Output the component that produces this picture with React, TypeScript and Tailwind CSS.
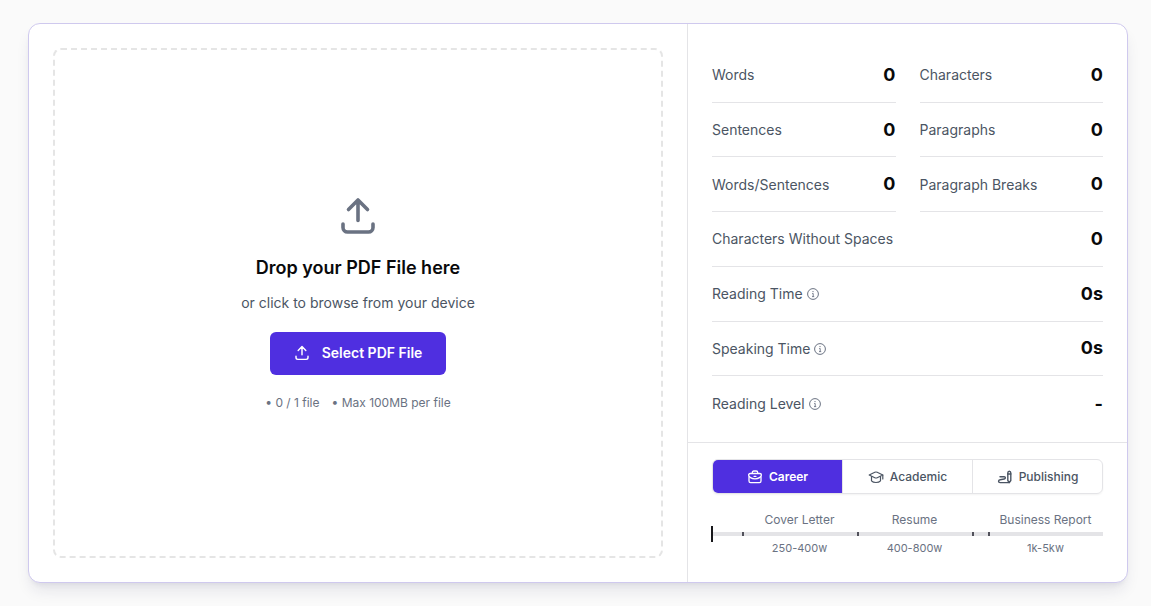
import React, { FC, ReactNode } from 'react';

interface StatRowProps {
  label: string;
  value: string;
  wide?: boolean;
  info?: boolean;
  last?: boolean;
}

interface GoalRange {
  name: string;
  words: string;
}

const stats: StatRowProps[] = [
  { label: 'Words', value: '0' },
  { label: 'Characters', value: '0' },
  { label: 'Sentences', value: '0' },
  { label: 'Paragraphs', value: '0' },
  { label: 'Words/Sentences', value: '0' },
  { label: 'Paragraph Breaks', value: '0' },
  { label: 'Characters Without Spaces', value: '0', wide: true },
  { label: 'Reading Time', value: '0s', wide: true, info: true },
  { label: 'Speaking Time', value: '0s', wide: true, info: true },
  { label: 'Reading Level', value: '-', wide: true, info: true, last: true },
];

// null is a gap between two ranges
const ranges: (GoalRange | null)[] = [
  null,
  { name: 'Cover Letter', words: '250-400w' },
  { name: 'Resume', words: '400-800w' },
  null,
  { name: 'Business Report', words: '1k-5kw' },
];

const UploadIcon: FC<{ className?: string }> = ({ className }) => (
  <svg
    className={className}
    viewBox="0 0 40 40"
    fill="none"
    stroke="currentColor"
    strokeWidth="3.6"
    strokeLinecap="round"
    strokeLinejoin="round"
    aria-hidden="true"
  >
    <path d="M20 24.5V4.5M10.5 13.5 20 4l9.5 9.5" />
    <path d="M5 28v3.5a4.5 4.5 0 0 0 4.5 4.5h21a4.5 4.5 0 0 0 4.5-4.5V28" />
  </svg>
);

const InfoIcon = () => (
  <svg className="size-3" viewBox="0 0 12 12" fill="none" stroke="currentColor" aria-hidden="true">
    <circle cx="6" cy="6" r="5.4" strokeWidth="1" />
    <path d="M5.2 5.5H6.2V8.5M5 8.6h2.2" strokeWidth="0.9" />
    <circle cx="6" cy="3.6" r="0.7" fill="currentColor" stroke="none" />
  </svg>
);

const CareerIcon = () => (
  <svg className="size-4" viewBox="0 0 16 16" fill="none" stroke="currentColor" strokeWidth="1.3" strokeLinejoin="round" aria-hidden="true">
    <path d="M5.300 4.500V3.500c0-.9.6-1.500 1.500-1.500h2.400c.9 0 1.500.6 1.500 1.500v1" />
    <path d="M3.200 4.500h9.600c1 0 1.600.6 1.600 1.500 0 2-3 3.800-6.400 3.800S1.600 8 1.600 6c0-.9.6-1.500 1.600-1.500Z" />
    <path d="M2 8v4c0 1 .6 1.700 1.600 1.700h8.800c1 0 1.600-.7 1.600-1.700V8M7 7.300h2" strokeLinecap="round" />
  </svg>
);

const AcademicIcon = () => (
  <svg className="size-4" viewBox="0 0 16 16" fill="none" stroke="currentColor" strokeWidth="1.2" strokeLinecap="round" strokeLinejoin="round" aria-hidden="true">
    <path d="M1.200 6 6.800 3.300c.8-.4 1.600-.4 2.400 0L14.800 6 9.200 8.700c-.8.4-1.600.4-2.400 0Z" />
    <path d="M3.500 7.500v4.300c1 1.200 2.400 1.700 4.500 1.700s3.500-.5 4.500-1.700V7.500" />
    <path d="M14.800 6v4" />
  </svg>
);

const PublishingIcon = () => (
  <svg className="size-4" viewBox="0 0 16 16" fill="none" stroke="currentColor" strokeWidth="1.4" strokeLinecap="round" strokeLinejoin="round" aria-hidden="true">
    <path d="M10.800 4c0-2.400 3-2.400 3 0v7.500L12.300 13.600l-1.500-2.100Z" />
    <path d="M3 7.800h4.200c1.600 0 1.600 1.900 0 2.200l-4 .8c-2.200.4-2.200 2.800 0 2.800h9.100" />
    <path d="M10.800 5h3" />
  </svg>
);

const StatRow: FC<StatRowProps> = ({ label, value, wide, info, last }) => (
  <div
    className={`flex items-center justify-between ${wide ? 'col-span-2' : ''} ${
      last ? '' : 'border-b border-[#e4e4e7]'
    }`}
  >
    <dt className="flex items-center gap-1 pt-px text-sm text-[#4b5563]">
      {label}
      {info && (
        <button type="button" aria-label={`About ${label}`} className="text-gray-500">
          <InfoIcon />
        </button>
      )}
    </dt>
    <dd className="text-lg font-bold text-[#09090b]">{value}</dd>
  </div>
);

const Tab: FC<{ icon: ReactNode; label: string; active?: boolean }> = ({ icon, label, active }) => (
  <button
    type="button"
    role="tab"
    aria-selected={!!active}
    className={`flex h-full flex-1 items-center justify-center gap-1.5 text-xs ${
      active ? 'bg-[#4f2fe0] font-semibold text-white' : 'font-medium text-[#4b5563]'
    }`}
  >
    {icon}
    {label}
  </button>
);

const DropZone = () => (
  <section className="flex min-h-[510px] flex-1 flex-col items-center justify-center rounded-lg border-2 border-dashed border-[#e5e5e5]">
    <UploadIcon className="size-10 text-gray-500" />
    <h2 className="mt-4 text-lg leading-8 font-semibold text-[#09090b]">Drop your PDF File here</h2>
    <p className="mt-2 text-sm leading-[22px] text-[#4b5563]">or click to browse from your device</p>
    <button
      type="button"
      className="mt-[18px] flex h-[43px] items-center gap-3 rounded-md bg-[#4f2fe0] px-6 text-sm font-semibold text-white"
    >
      <UploadIcon className="size-4" />
      Select PDF File
    </button>
    <ul className="mt-5 flex gap-3 text-xs text-gray-500">
      <li>• 0 / 1 file</li>
      <li>• Max 100MB per file</li>
    </ul>
  </section>
);

const GoalScale = () => (
  <div className="relative mt-4 grid grid-cols-[30fr_115fr_115fr_16fr_115fr] text-center">
    {ranges.map((range, i) => (
      <div key={i} className="flex flex-col">
        <span className="h-5 text-xs leading-5 whitespace-nowrap text-gray-500">{range?.name}</span>
        <span className={`mt-0.5 h-1 bg-[#e4e4e7] ${i > 0 ? 'border-l-2 border-[#52525b]' : ''}`} />
        <span className="mt-1 h-4 text-[11px] leading-4 text-gray-500">{range?.words}</span>
      </div>
    ))}
    <span className="absolute top-4 -left-px h-4 w-0.5 bg-[#18181b]" />
  </div>
);

export default function App() {
  return (
    <main className="min-h-screen bg-[#fafafa] py-[23px] pr-[23px] pl-7 font-['Inter',sans-serif]">
      <div className="mx-auto grid max-w-[1100px] grid-cols-[minmax(0,1fr)_440px] overflow-hidden rounded-xl border border-[#cfc9ee] bg-white shadow-lg shadow-indigo-950/10">
        <div className="flex p-6">
          <DropZone />
        </div>
        <aside className="flex flex-col border-l border-[#e4e4e7]">
          <dl className="grid flex-1 auto-rows-fr grid-cols-2 gap-x-6 px-6 pt-6 pb-[11px]">
            {stats.map((stat) => (
              <StatRow key={stat.label} {...stat} />
            ))}
          </dl>
          <div className="border-t border-[#e4e4e7] px-6 pt-4 pb-[26px]">
            <div
              role="tablist"
              className="flex h-[35px] divide-x divide-[#e4e4e7] overflow-hidden rounded-md border border-[#e4e4e7] shadow-xs"
            >
              <Tab icon={<CareerIcon />} label="Career" active />
              <Tab icon={<AcademicIcon />} label="Academic" />
              <Tab icon={<PublishingIcon />} label="Publishing" />
            </div>
            <GoalScale />
          </div>
        </aside>
      </div>
    </main>
  );
}
